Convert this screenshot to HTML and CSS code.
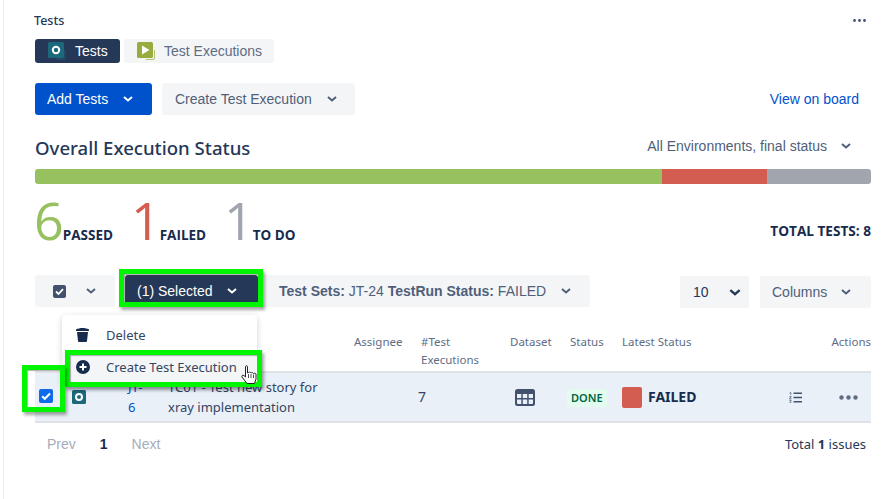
FILE: index.html
```html
<!DOCTYPE html>
<html lang="en">
<head>
<meta charset="utf-8">
<title>Tests</title>
<link rel="stylesheet" href="styles.css">
</head>
<body>
<main class="panel">
  <header class="title-row">
    <h2 class="title">Tests</h2>
    <svg class="more-top" width="13" height="3" viewBox="0 0 13 3"><circle cx="1.5" cy="1.5" r="1.4"/><circle cx="6.5" cy="1.5" r="1.4"/><circle cx="11.5" cy="1.5" r="1.4"/></svg>
  </header>

  <nav class="tabs">
    <div class="tab tab-active">
      <svg class="tab-icon" width="18" height="18" viewBox="0 0 18 18"><path d="M9 17h7a1 1 0 0 0 1-1V8" fill="none" stroke="#1b6a7c" stroke-width=".7"/><rect width="16" height="16" rx="1.5" fill="#1b6a7c"/><circle cx="8" cy="8" r="3.2" fill="none" stroke="#fff" stroke-width="2"/></svg>
      <span>Tests</span>
    </div>
    <div class="tab">
      <svg class="tab-icon" width="18" height="18" viewBox="0 0 18 18"><path d="M9 17.500h7a1.500 1.500 0 0 0 1.500-1.500V8" fill="none" stroke="#98ab3e" stroke-width=".7"/><rect width="16" height="16" rx="1.500" fill="#98ab3e"/><path d="M5 3.500 12.500 8 5 12.500z" fill="#fff"/></svg>
      <span>Test Executions</span>
    </div>
  </nav>

  <section class="actions">
    <button class="btn btn-primary">Add Tests<svg class="chev" viewBox="0 0 10 6"><path d="M1 1l4 3.500L9 1"/></svg></button>
    <button class="btn btn-subtle">Create Test Execution<svg class="chev" viewBox="0 0 10 6"><path d="M1 1l4 3.500L9 1"/></svg></button>
    <a class="board-link">View on board</a>
  </section>

  <section class="status-head">
    <h1 class="heading">Overall Execution Status</h1>
    <div class="env">All Environments, final status<svg class="chev" viewBox="0 0 10 6"><path d="M1 1l4 3.500L9 1"/></svg></div>
  </section>

  <div class="bar">
    <span class="seg seg-pass"></span><span class="seg seg-fail"></span><span class="seg seg-todo"></span>
  </div>

  <section class="stats">
    <div class="stat"><span class="digit d-pass">6</span><span class="label">PASSED</span></div>
    <div class="stat"><span class="digit d-fail">1</span><span class="label">FAILED</span></div>
    <div class="stat"><span class="digit d-todo">1</span><span class="label">TO DO</span></div>
    <div class="total">TOTAL TESTS: 8</div>
  </section>

  <section class="toolbar">
    <div class="tool tool-check">
      <svg width="13" height="13" viewBox="0 0 13 13"><rect width="13" height="13" rx="2" fill="#42526e"/><path d="M3 6.500l2.500 2.500L10 4.200" fill="none" stroke="#fff" stroke-width="1.800"/></svg>
      <svg class="chev" viewBox="0 0 10 6"><path d="M1 1l4 3.500L9 1"/></svg>
    </div>
    <div class="tool tool-selected">(1) Selected<svg class="chev" viewBox="0 0 10 6"><path d="M1 1l4 3.500L9 1"/></svg></div>
    <div class="tool tool-filter"><span><b>Test Sets:</b> JT-24 <b>TestRun Status:</b> FAILED</span><svg class="chev" viewBox="0 0 10 6"><path d="M1 1l4 3.500L9 1"/></svg></div>
    <div class="tool tool-size"><span>10</span><svg class="chev chev-lg" viewBox="0 0 10 6"><path d="M1 1l4 3.500L9 1"/></svg></div>
    <div class="tool tool-cols">Columns<svg class="chev" viewBox="0 0 10 6"><path d="M1 1l4 3.500L9 1"/></svg></div>
  </section>

  <section class="table">
    <div class="grid thead">
      <span class="c-assignee">Assignee</span>
      <span class="c-exec">#Test Executions</span>
      <span class="c-data">Dataset</span>
      <span class="c-status">Status</span>
      <span class="c-latest">Latest Status</span>
      <span class="c-act">Actions</span>
    </div>
    <div class="grid trow">
      <span class="cell-check"><svg width="14" height="14" viewBox="0 0 14 14"><rect width="14" height="14" rx="2" fill="#0f6be9"/><path d="M3.200 7.200l2.600 2.600L11 4.500" fill="none" stroke="#fff" stroke-width="2"/></svg></span>
      <span class="cell-icon"><svg width="14" height="14" viewBox="0 0 14 14"><rect width="14" height="14" rx="1.500" fill="#1b6a7c"/><circle cx="7" cy="7" r="3" fill="none" stroke="#fff" stroke-width="2"/></svg></span>
      <a class="cell-key">JT-<wbr>6</a>
      <span class="cell-sum">TC01 - Test new story for xray implementation</span>
      <span class="cell-exec">7</span>
      <span class="cell-data"><svg width="20" height="17" viewBox="0 0 20 17"><rect width="20" height="17" rx="2.500" fill="#42526e"/><path d="M2 5h4.300v4H2zM7.800 5h4.400v4H7.800zM13.700 5H18v4h-4.300zM2 10.500h4.300V15H3a1 1 0 0 1-1-1zM7.800 10.500h4.400V15H7.800zM13.700 10.500H18V14a1 1 0 0 1-1 1h-3.300z" fill="#e9f0f8"/></svg></span>
      <span class="cell-status"><span class="lozenge">DONE</span></span>
      <span class="cell-latest"><i class="swatch"></i><b>FAILED</b></span>
      <span class="cell-steps"><svg width="13" height="11" viewBox="0 0 13 11"><path d="M4.500 1.200H13M4.500 5.500H13M4.500 9.800H13" stroke="#42526e" stroke-width="1.600" fill="none"/><path d="M.6 1 1.800.5V3M.3 4.600h2L.4 6.800h2.100M.3 8.300h2L1.200 9.500c1 0 1.200 1.200 0 1.300H.3" fill="none" stroke="#42526e" stroke-width=".7"/></svg></span>
      <span class="cell-more"><svg width="19" height="5" viewBox="0 0 19 5"><circle cx="2.500" cy="2.500" r="2.200"/><circle cx="9.500" cy="2.500" r="2.200"/><circle cx="16.500" cy="2.500" r="2.200"/></svg></span>
    </div>
  </section>

  <footer class="pager">
    <span class="muted">Prev</span><b class="page">1</b><span class="muted">Next</span>
    <span class="count">Total <b>1</b> issues</span>
  </footer>
</main>

<div class="menu">
  <div class="menu-item">
    <svg width="13" height="14" viewBox="0 0 13 14"><path d="M0 1.500C2 .5 4 0 6.500 0S11 .5 13 1.500V3H0z" fill="#172b4d"/><path d="M1 4h11l-1 9a1 1 0 0 1-1 1H3a1 1 0 0 1-1-1z" fill="#172b4d"/></svg>
    <span>Delete</span>
  </div>
  <div class="menu-item menu-hover">
    <svg width="14" height="14" viewBox="0 0 14 14"><circle cx="7" cy="7" r="7" fill="#172b4d"/><path d="M7 3.500v7M3.500 7h7" stroke="#fff" stroke-width="2"/></svg>
    <span>Create Test Execution</span>
  </div>
</div>

<div class="mark mark-selected"></div>
<div class="mark mark-create"></div>
<div class="mark mark-check"></div>
<svg class="cursor" width="17" height="20" viewBox="0 0 17 20"><path d="M4.500 1.500c0-1 2-1 2 0V8l1-.5c.5-.5 1.500-.5 2 0l.5.500c.5-.5 1.500-.5 2 0l.5.500c.5-.5 2-.5 2.500.5V14l-1.500 4.500H6L1 12c-.8-1.200.8-2.400 2-1.400l1.500 1.400z" fill="#fff" stroke="#222" stroke-width="1"/><path d="M7.500 9v4M10 9v4M12.500 9.500V13" stroke="#222" stroke-width=".8"/></svg>
</body>
</html>
```
FILE: styles.css
```css
* { box-sizing: border-box; }
html, body { margin: 0; padding: 0; }
body {
  width: 893px;
  height: 499px;
  overflow: hidden;
  background: #fff;
  font-family: "Liberation Sans", Arial, sans-serif;
  color: #172b4d;
  position: relative;
}
.panel {
  margin-left: 3px;
  height: 499px;
  width: 868px;
  padding-left: 31px;
  border-left: 1px solid #ececec;
}
svg { display: block; flex: none; }
.chev { width: 10px; height: 6px; fill: none; stroke: currentColor; stroke-width: 2; }
.chev-lg { width: 12px; height: 7px; }

.title-row { display: flex; justify-content: space-between; align-items: center; height: 39px; padding-right: 5px; padding-top: 2px; }
.title { margin: 0 0 0 -1px; font: 500 12.500px "Noto Sans", sans-serif; color: #253858; }
.more-top { fill: #42526e; }

.tabs { display: flex; gap: 4px; height: 24px; }
.tab { display: flex; align-items: center; height: 24px; background: #f4f5f7; color: #5e6c84; font-size: 14px; border-radius: 3px; padding: 0 12px 0 13px; gap: 9px; }
.tab-active { background: #253858; color: #fff; width: 85px; }

.actions { display: flex; align-items: center; height: 32px; margin-top: 20px; gap: 10px; font-size: 14px; }
.btn { display: flex; align-items: center; height: 32px; border: 0; border-radius: 3px; font: 14px "Liberation Sans", sans-serif; padding: 0 12px; }
.btn-primary { background: #0052cc; color: #fff; gap: 15px; width: 117px; }
.btn-subtle { background: #f4f5f7; color: #505f79; gap: 15px; width: 193px; padding-left: 13px; }
.board-link { margin-left: auto; margin-right: 12px; color: #0052cc; }

.status-head { display: flex; align-items: center; justify-content: space-between; margin-top: 19px; height: 28px; padding-right: 20px; }
.heading { margin: -2px 0 0; font: 500 18.600px "Noto Sans", sans-serif; color: #253858; }
.env { display: flex; align-items: center; gap: 14px; color: #505f79; font-size: 14px; margin-top: -4px; }

.bar { display: flex; height: 15px; margin-top: 7px; border-radius: 3px; overflow: hidden; }
.seg-pass { width: 627px; background: #97c05f; }
.seg-fail { width: 105px; background: #d35d50; }
.seg-todo { flex: 1; background: #a1a5ae; }

.stats { display: flex; align-items: flex-end; height: 66px; }
.stat { display: flex; align-items: baseline; margin-right: 18px; }
.digit { font: 400 52px/60px "Open Sans", sans-serif; }
.d-pass { color: #97c05f; margin-left: -1px; }
.d-fail { color: #d35d50; }
.d-todo { color: #a1a5ae; }
.label { font: 700 13.500px "Open Sans", sans-serif; color: #172b4d; margin-left: -1px; }
.total { margin-left: auto; font: 700 13.600px/18px "Open Sans", sans-serif; margin-bottom: 10px; }

.toolbar { display: flex; align-items: flex-start; margin-top: 25px; height: 33px; font-size: 14px; color: #505f79; }
.tool { display: flex; align-items: center; height: 32px; background: #f4f5f7; border-radius: 3px; }
.tool-check { width: 80px; padding-left: 18px; gap: 20px; }
.tool-selected { width: 133px; margin-left: 10px; background: #253858; color: #fff; padding-left: 12px; gap: 15px; }
.tool-filter { margin-left: 5px; width: 327px; padding-left: 16px; gap: 15px; border-radius: 0 3px 3px 0; }
.tool-size { margin-left: 90px; margin-top: 1px; width: 69px; padding-left: 13px; gap: 20px; color: #253858; }
.tool-cols { margin-left: 11px; margin-top: 1px; width: 111px; padding-left: 12px; gap: 14px; }

.table { margin-top: 24px; font: 11.500px/18px "Noto Sans", sans-serif; color: #5e6c84; }
.grid { display: grid; grid-template-rows: auto; grid-template-columns: 37px 53px 43px 186px 67px 89px 60px 52px 158px 1fr 36px; }
.grid > * { grid-row: 1; }
.thead { height: 41px; border-bottom: 2px solid #dfe1e6; padding-top: 1px; }
.c-assignee { grid-column: 5; }
.c-exec { grid-column: 6; width: 70px; }
.c-data { grid-column: 7; }
.c-status { grid-column: 8; }
.c-latest { grid-column: 9; }
.c-act { grid-column: 10 / 12; justify-self: end; }

.trow { height: 50px; background: #e9f0f8; border-bottom: 2px solid #dfe1e6; align-items: center; font-size: 13px; line-height: 20px; color: #344563; }
.cell-check { grid-column: 1; padding-left: 4px; margin-top: -3px; }
.cell-icon { grid-column: 2; }
.cell-key { grid-column: 3; color: #0052cc; width: 18px; margin-left: 3px; }
.cell-sum { grid-column: 4 / 6; width: 170px; }
.cell-exec { grid-column: 6; margin-left: -3px; font-size: 14px; }
.cell-data { grid-column: 7; margin-left: 5px; }
.cell-status { grid-column: 8; margin-left: -3px; }
.lozenge { display: inline-block; background: #e3fcef; color: #006644; font: 600 11px/16px "Noto Sans", sans-serif; padding: 1px 4px; border-radius: 3px; }
.cell-latest { grid-column: 9; display: flex; align-items: center; gap: 6px; color: #172b4d; font-size: 14px; }
.swatch { width: 20px; height: 21px; border-radius: 2px; background: #d35d50; }
.cell-steps { grid-column: 10; justify-self: start; margin-left: 9px; }
.cell-more { grid-column: 10 / 12; justify-self: end; margin-right: 13px; fill: #5e6c84; }

.pager { display: flex; align-items: center; margin-top: 12px; height: 18px; font-size: 14px; padding-left: 12px; }
.muted { color: #a5adba; }
.page { color: #172b4d; margin: 0 24px 0 24px; font-weight: 700; }
.count { margin-left: auto; margin-right: 5px; font: 13px "Noto Sans", sans-serif; color: #253858; }

.menu { position: absolute; left: 62px; top: 315px; width: 195px; height: 70px; background: #fff; border-radius: 4px; box-shadow: 0 2px 6px rgba(9,30,66,.2); padding-top: 4px; font: 13px "Noto Sans", sans-serif; color: #344563; }
.menu-item { display: flex; align-items: center; height: 32px; padding-left: 14px; gap: 17px; }
.menu-hover { background: #f4f5f7; gap: 16px; }

.mark { position: absolute; border: 5px solid #00f500; box-shadow: 2px 3px 3px rgba(0,0,0,.35), inset 1px 1px 1px rgba(120,120,120,.6); }
.mark-selected { left: 119px; top: 269px; width: 144px; height: 38px; }
.mark-create { left: 65px; top: 350px; width: 197px; height: 37px; }
.mark-check { left: 22px; top: 365px; width: 43px; height: 47px; }
.cursor { position: absolute; left: 241px; top: 365px; }
```
